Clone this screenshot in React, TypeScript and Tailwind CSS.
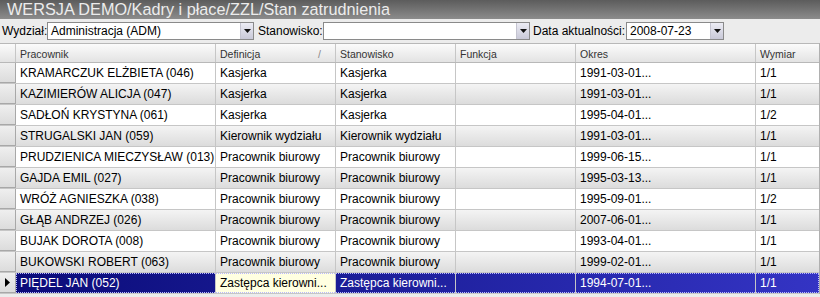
import React from 'react';

type Row = { name: string; def: string; stan: string; okres: string; wym: string };

const rows: Row[] = [
  { name: 'KRAMARCZUK ELŻBIETA (046)', def: 'Kasjerka', stan: 'Kasjerka', okres: '1991-03-01...', wym: '1/1' },
  { name: 'KAZIMIERÓW ALICJA (047)', def: 'Kasjerka', stan: 'Kasjerka', okres: '1991-03-01...', wym: '1/1' },
  { name: 'SADŁOŃ KRYSTYNA (061)', def: 'Kasjerka', stan: 'Kasjerka', okres: '1995-04-01...', wym: '1/2' },
  { name: 'STRUGALSKI JAN (059)', def: 'Kierownik wydziału', stan: 'Kierownik wydziału', okres: '1991-03-01...', wym: '1/1' },
  { name: 'PRUDZIENICA MIECZYSŁAW (013)', def: 'Pracownik biurowy', stan: 'Pracownik biurowy', okres: '1999-06-15...', wym: '1/1' },
  { name: 'GAJDA EMIL (027)', def: 'Pracownik biurowy', stan: 'Pracownik biurowy', okres: '1995-03-13...', wym: '1/1' },
  { name: 'WRÓŻ AGNIESZKA (038)', def: 'Pracownik biurowy', stan: 'Pracownik biurowy', okres: '1995-09-01...', wym: '1/2' },
  { name: 'GŁĄB ANDRZEJ (026)', def: 'Pracownik biurowy', stan: 'Pracownik biurowy', okres: '2007-06-01...', wym: '1/1' },
  { name: 'BUJAK DOROTA (008)', def: 'Pracownik biurowy', stan: 'Pracownik biurowy', okres: '1993-04-01...', wym: '1/1' },
  { name: 'BUKOWSKI ROBERT (063)', def: 'Pracownik biurowy', stan: 'Pracownik biurowy', okres: '1999-02-01...', wym: '1/1' },
  { name: 'PIĘDEL JAN (052)', def: 'Zastępca kierowni...', stan: 'Zastępca kierowni...', okres: '1994-07-01...', wym: '1/1' },
];

const cols = 'grid grid-cols-[16px_200px_120px_120px_120px_180px_63px]';

const DropButton = () => (
  <div className="flex h-full w-[13px] items-center justify-center border-l border-[#c4c4d0] bg-linear-to-b from-[#ececf4] to-[#c9c9d8]">
    <svg width="7" height="4" viewBox="0 0 7 4">
      <path d="M0 0h7L3.5 4z" fill="#111" />
    </svg>
  </div>
);

const Combo = ({ value, width }: { value: string; width: string }) => (
  <div className={`flex h-[18px] shrink-0 items-stretch border border-[#8a8a8a] bg-white ${width}`}>
    <div className="flex-1 truncate pl-[3px] text-[12px] leading-[16px] text-black">{value}</div>
    <DropButton />
  </div>
);

const Cell = ({ children, className = '' }: { children?: React.ReactNode; className?: string }) => (
  <div className={`truncate border-r border-[#c6c6c6] pl-[4px] leading-[20px] ${className}`}>{children}</div>
);

export default function App() {
  return (
    <div className="h-[297px] w-[820px] overflow-hidden bg-[#ececec] font-['Liberation_Sans',Arial,sans-serif]">
      <div className="flex h-[19px] items-center bg-linear-to-b from-[#5c5c5c] to-[#8c8c8c] pl-[7px] text-[16.25px] leading-[19px] text-[#ececec]">
        WERSJA DEMO/Kadry i płace/ZZL/Stan zatrudnienia
      </div>

      <div className="flex h-[24px] items-center text-[12px] text-black">
        <span className="w-[47px] shrink-0 pl-[2px]">Wydział:</span>
        <Combo value="Administracja (ADM)" width="w-[207px]" />
        <span className="w-[69px] shrink-0 pl-[4px]">Stanowisko:</span>
        <Combo value="" width="w-[207px]" />
        <span className="w-[96px] shrink-0 pl-[3px]">Data aktualności:</span>
        <Combo value="2008-07-23" width="w-[98px]" />
      </div>

      <div className="w-[820px] border-r border-[#b0b0b0] bg-white text-[12px] text-black">
        <div className={`${cols} h-[20px] border-y border-[#b8b8b8] bg-linear-to-b from-[#fbfbfb] to-[#e3e3e3] text-[10.5px] text-[#333]`}>
          <div className="border-r border-[#c6c6c6]" />
          <Cell>Pracownik</Cell>
          <Cell className="relative">
            Definicja
            <span className="absolute right-[14px] top-0 text-[#888]">/</span>
          </Cell>
          <Cell>Stanowisko</Cell>
          <Cell>Funkcja</Cell>
          <Cell>Okres</Cell>
          <Cell className="border-r-0">Wymiar</Cell>
        </div>

        {rows.map((r, i) => {
          const selected = i === rows.length - 1;
          const gray = i % 2 === 1;
          const rowBg = selected
            ? 'bg-linear-to-r from-[#0a0a78] to-[#3434c4] text-white'
            : gray
              ? 'bg-linear-to-b from-[#f4f4f4] to-[#dcdcdc]'
              : 'bg-white';
          return (
            <div key={r.name} className={`${cols} relative h-[21px] border-b border-[#c6c6c6] ${rowBg}`}>
              <div className="flex items-center border-r border-b border-[#a8a8a8] bg-linear-to-b from-[#efefef] to-[#dcdcdc] pl-[5px]">
                {selected && (
                  <svg width="5" height="9" viewBox="0 0 5 9">
                    <path d="M0 0l5 4.5L0 9z" fill="#000" />
                  </svg>
                )}
              </div>
              <Cell>{r.name}</Cell>
              <Cell className={selected ? 'bg-[#ffffe1] text-black' : ''}>{r.def}</Cell>
              <Cell>{r.stan}</Cell>
              <Cell />
              <Cell>{r.okres}</Cell>
              <Cell className="border-r-0">{r.wym}</Cell>
              {selected && (
                <div className="pointer-events-none absolute inset-y-0 left-[16px] right-0 border border-dotted border-[#b8b8ff]" />
              )}
            </div>
          );
        })}
      </div>
    </div>
  );
}
